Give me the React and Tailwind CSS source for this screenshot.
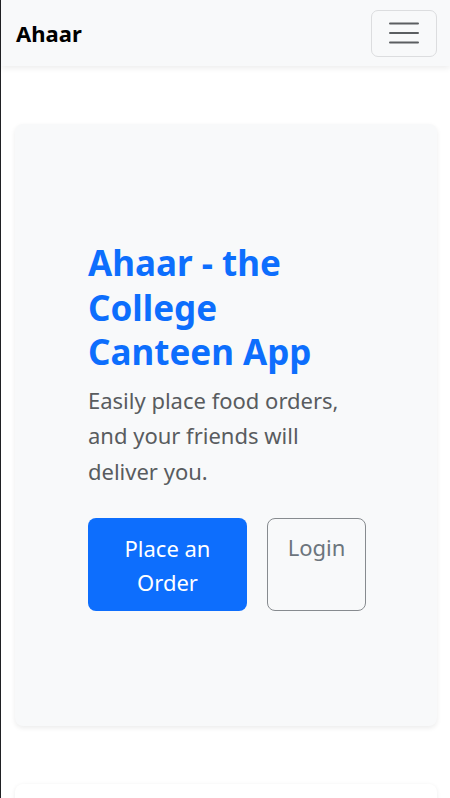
export default function App() {
  return (
    <div
      className="min-h-screen border-l border-[#202124] bg-white text-[#212529]"
      style={{ fontFamily: '"Noto Sans", "Open Sans", sans-serif' }}
    >
      <nav className="flex h-[66px] items-center justify-between bg-[#f8f9fa] pl-[15px] pr-[13px] shadow-[0_2px_6px_rgba(0,0,0,0.08)]">
        <span className="text-[22px] font-bold leading-none text-black">Ahaar</span>
        <button className="flex h-[47px] w-[66px] items-center justify-center rounded-[7px] border border-[#dcdddf]">
          <svg width="30" height="24" viewBox="0 0 30 24">
            <path d="M1 2.5h28M1 12h28M1 21.5h28" stroke="#5b5e61" strokeWidth="2" strokeLinecap="round" />
          </svg>
        </button>
      </nav>

      <main className="ml-[14px] mr-[13px] pt-[58px] pb-4">
        <section className="rounded-lg bg-[#f8f9fa] pl-[73px] pr-[40px] pt-[117px] pb-[115px] shadow-[0_2px_5px_rgba(0,0,0,0.08)]">
          <div className="w-[280px]">
            <h1 className="w-[270px] text-[35px] font-bold leading-[44.5px] text-[#0d6efd]">
              Ahaar - the College Canteen App
            </h1>
            <p className="mt-[8px] w-[270px] text-[22px] leading-[35.5px] text-[#595c5f]">
              Easily place food orders, and your friends will deliver you.
            </p>
            <div className="mt-[29px] flex items-start gap-[20px]">
              <button className="h-[93px] w-[159px] shrink-0 rounded-lg bg-[#0d6efd] px-4 py-[11px] text-[22px] leading-[34px] text-white">
                Place an Order
              </button>
              <button className="flex h-[93px] w-[99px] shrink-0 justify-center rounded-lg border border-[#878b8f] px-3 py-[11px] text-[22px] leading-[34px] text-[#6c757d]">
                Login
              </button>
            </div>
          </div>
        </section>

        <section className="mt-[58px] h-[120px] rounded-lg bg-white shadow-[0_1px_4px_rgba(0,0,0,0.08)]" />
      </main>
    </div>
  );
}
